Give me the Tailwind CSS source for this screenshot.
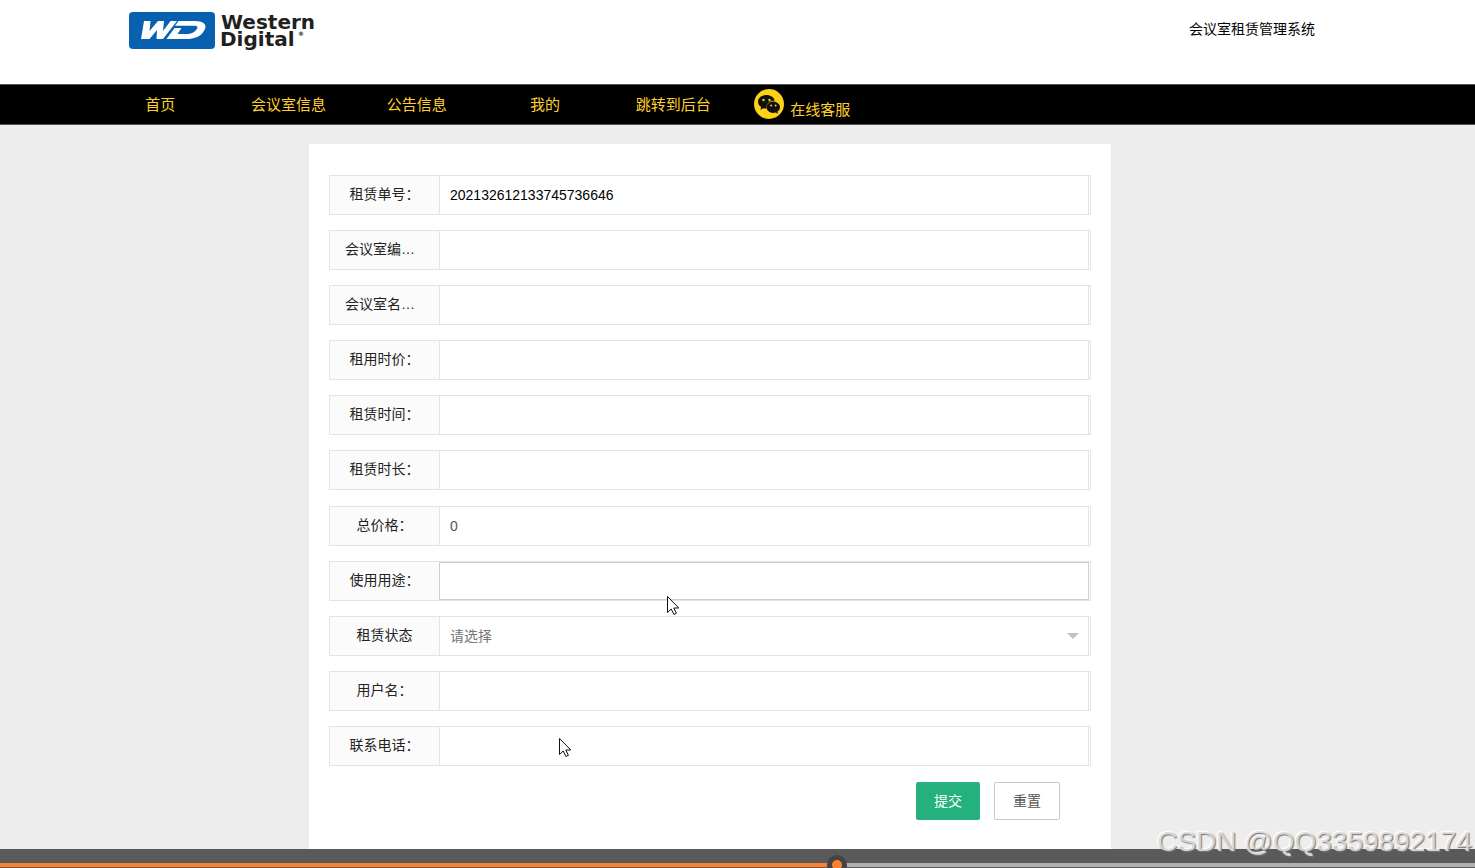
<!DOCTYPE html>
<html lang="zh-CN">
<head>
<meta charset="utf-8">
<title>会议室租赁管理系统</title>
<script src="https://cdn.jsdelivr.net/npm/@tailwindcss/browser@4"></script>
</head>
<body class="relative h-screen overflow-hidden bg-[#ededed] font-['Liberation_Sans','Noto_Sans_CJK_SC',sans-serif] text-sm text-[#222]">
<header class="flex h-[84px] items-start justify-between bg-white pr-40 pl-32">
  <a href="#" aria-label="Western Digital" class="mt-[11px]">
    <svg width="192" height="40" viewBox="0 0 192 40">
      <rect x="1" y="1" width="86" height="37" rx="4" fill="#0860b0"/>
      <g fill="#fff">
        <path d="M16 10H22.500L21.500 20L30 10H36L35 20L42.500 10H49L35 28H28.500L29 19L21.500 28H13Z"/>
        <path d="M50.500 10H67C76 10 79.500 14 76.500 19C73 25.500 67 28 58 28H38.500L46.500 17H53.500L49.500 23H58C63.500 23 67 21 68.800 18C70.500 15.500 69 14.800 65 14.800H47Z"/>
      </g>
      <g fill="#231f20" font-family="DejaVu Sans, sans-serif" font-weight="700" font-size="20">
        <text x="93" y="18">Western</text>
        <text x="92" y="35">Digital</text>
        <text x="170" y="25" font-size="6">®</text>
      </g>
    </svg>
  </a>
  <span class="mt-[19px] leading-5 text-black">会议室租赁管理系统</span>
</header>
<nav class="h-[41px] border-y border-[#555] bg-black px-24 text-[15px] text-[#ffd02c]">
  <div class="grid h-full grid-cols-10 items-center text-center whitespace-nowrap">
    <a href="#">首页</a>
    <a href="#">会议室信息</a>
    <a href="#">公告信息</a>
    <a href="#">我的</a>
    <a href="#">跳转到后台</a>
    <a href="#" class="flex items-center justify-center gap-[5px]">
      <svg width="32" height="32" viewBox="0 0 32 32" class="shrink-0">
        <circle cx="16" cy="15" r="15" fill="#fcd116"/>
        <path fill="#111" d="M13.500 6C8.800 6 5 9 5 12.800c0 2.200 1.200 4 3.200 5.300l-.8 2.600 3-1.500c1 .3 2 .4 3.300.4-1-4.600 3-8.200 8.100-8.100-.9-3.200-4.300-5.500-8.300-5.500z"/>
        <path fill="#111" d="M27 18.200c0-3.200-3.200-5.700-6.700-5.700-3.800 0-6.700 2.600-6.700 5.700 0 3.200 3 5.700 6.700 5.700.8 0 1.600-.2 2.400-.4l2.300 1.300-.6-2.200c1.600-1.200 2.600-2.700 2.600-4.400z"/>
        <g fill="#fcd116"><circle cx="10.500" cy="11" r="1.200"/><circle cx="16.500" cy="11" r="1.200"/><circle cx="18.200" cy="16.500" r="1"/><circle cx="22.600" cy="16.500" r="1"/></g>
      </svg>
      <span class="pt-2.5">在线客服</span>
    </a>
  </div>
</nav>
<div class="pt-[19px] pr-[55px]">
<main class="mx-auto w-[802px] max-w-full bg-white px-5 pt-[31px] pb-9">
  <form>
    <div class="grid gap-[15px]">
      <div class="flex h-10 border border-[#e4e4e4] pr-px">
        <label for="f1" class="w-[110px] shrink-0 border-r border-[#e4e4e4] bg-[#fbfbfb] px-[15px] text-center leading-9 whitespace-nowrap">租赁单号：</label>
        <input id="f1" type="text" value="202132612133745736646" class="min-w-0 flex-1 border-r border-[#e4e4e4] px-2.5 text-black outline-none">
      </div>
      <div class="flex h-10 border border-[#e4e4e4] pr-px">
        <label for="f2" class="w-[110px] shrink-0 border-r border-[#e4e4e4] bg-[#fbfbfb] px-[15px] leading-9 whitespace-nowrap">会议室编…</label>
        <input id="f2" type="text" class="min-w-0 flex-1 border-r border-[#e4e4e4] px-2.5 outline-none">
      </div>
      <div class="flex h-10 border border-[#e4e4e4] pr-px">
        <label for="f3" class="w-[110px] shrink-0 border-r border-[#e4e4e4] bg-[#fbfbfb] px-[15px] leading-9 whitespace-nowrap">会议室名…</label>
        <input id="f3" type="text" class="min-w-0 flex-1 border-r border-[#e4e4e4] px-2.5 outline-none">
      </div>
      <div class="flex h-10 border border-[#e4e4e4] pr-px">
        <label for="f4" class="w-[110px] shrink-0 border-r border-[#e4e4e4] bg-[#fbfbfb] px-[15px] text-center leading-9 whitespace-nowrap">租用时价：</label>
        <input id="f4" type="text" class="min-w-0 flex-1 border-r border-[#e4e4e4] px-2.5 outline-none">
      </div>
      <div class="flex h-10 border border-[#e4e4e4] pr-px">
        <label for="f5" class="w-[110px] shrink-0 border-r border-[#e4e4e4] bg-[#fbfbfb] px-[15px] text-center leading-9 whitespace-nowrap">租赁时间：</label>
        <input id="f5" type="text" class="min-w-0 flex-1 border-r border-[#e4e4e4] px-2.5 outline-none">
      </div>
      <div class="flex h-10 border border-[#e4e4e4] pr-px">
        <label for="f6" class="w-[110px] shrink-0 border-r border-[#e4e4e4] bg-[#fbfbfb] px-[15px] text-center leading-9 whitespace-nowrap">租赁时长：</label>
        <input id="f6" type="text" class="min-w-0 flex-1 border-r border-[#e4e4e4] px-2.5 outline-none">
      </div>
    </div>
    <div class="mt-4 grid gap-[15px]">
      <div class="flex h-10 border border-[#e4e4e4] pr-px">
        <label for="f7" class="w-[110px] shrink-0 border-r border-[#e4e4e4] bg-[#fbfbfb] px-[15px] text-center leading-9 whitespace-nowrap">总价格：</label>
        <input id="f7" type="text" value="0" class="min-w-0 flex-1 border-r border-[#e4e4e4] px-2.5 text-[#555] outline-none">
      </div>
      <div class="flex h-10 border border-[#e4e4e4] pr-px">
        <label for="f8" class="w-[109px] shrink-0 bg-[#fbfbfb] px-[15px] text-center leading-9 whitespace-nowrap">使用用途：</label>
        <input id="f8" type="text" class="min-w-0 flex-1 border border-[#cfcfcf] px-2.5 outline-none">
      </div>
      <div class="flex h-10 border border-[#e4e4e4] pr-px">
        <label for="f9" class="w-[110px] shrink-0 border-r border-[#e4e4e4] bg-[#fbfbfb] px-[15px] text-center leading-9 whitespace-nowrap">租赁状态</label>
        <div class="relative flex min-w-0 flex-1">
          <select id="f9" class="w-full appearance-none border-r border-[#e4e4e4] px-2.5 text-[#757575] outline-none"><option>请选择</option></select>
          <svg width="12" height="6" viewBox="0 0 12 6" class="pointer-events-none absolute top-4 right-2.5"><path d="M0 0h12L6 6z" fill="#c2c2c2"/></svg>
        </div>
      </div>
      <div class="flex h-10 border border-[#e4e4e4] pr-px">
        <label for="f10" class="w-[110px] shrink-0 border-r border-[#e4e4e4] bg-[#fbfbfb] px-[15px] text-center leading-9 whitespace-nowrap">用户名：</label>
        <input id="f10" type="text" class="min-w-0 flex-1 border-r border-[#e4e4e4] px-2.5 outline-none">
      </div>
      <div class="flex h-10 border border-[#e4e4e4] pr-px">
        <label for="f11" class="w-[110px] shrink-0 border-r border-[#e4e4e4] bg-[#fbfbfb] px-[15px] text-center leading-9 whitespace-nowrap">联系电话：</label>
        <input id="f11" type="text" class="min-w-0 flex-1 border-r border-[#e4e4e4] px-2.5 outline-none">
      </div>
    </div>
    <div class="mt-4 flex justify-end gap-3.5 pr-[31px]">
      <button type="submit" class="h-[38px] rounded-xs bg-[#24b17d] px-[18px] text-white">提交</button>
      <button type="reset" class="h-[38px] rounded-xs border border-[#c9c9c9] bg-white px-[18px] text-[#555]">重置</button>
    </div>
  </form>
</main>
</div>
<svg width="13" height="20" viewBox="0 0 13 20" class="pointer-events-none absolute top-[596px] left-[667px]"><path d="M.5.500v16l3.700-3.500 2.700 5.500 2.500-1.200-2.600-5.300h5z" fill="#fff" stroke="#111"/></svg>
<svg width="13" height="20" viewBox="0 0 13 20" class="pointer-events-none absolute top-[738px] left-[559px]"><path d="M.5.500v16l3.700-3.500 2.700 5.500 2.500-1.200-2.600-5.300h5z" fill="#fff" stroke="#111"/></svg>
<div class="absolute inset-x-0 bottom-0 h-[19px] overflow-hidden bg-[#5a5a5a]">
  <div class="absolute inset-x-0 top-3.5 h-1 bg-[#b0b0b0]"></div>
  <div class="absolute top-3.5 left-0 h-1 bg-[#ff8030]" style="width:56.7%"></div>
  <div class="absolute top-[6px] size-5 -translate-x-1/2 rounded-full border-5 border-[#444] bg-[#ff8030]" style="left:56.75%"></div>
</div>
<div class="absolute right-[3px] bottom-2 text-[28px] leading-9 whitespace-nowrap text-[#dedede]/90 [text-shadow:1px_1px_1px_#777,-1px_-1px_1px_#fff]">CSDN @QQ3359892174</div>
</body>
</html>
